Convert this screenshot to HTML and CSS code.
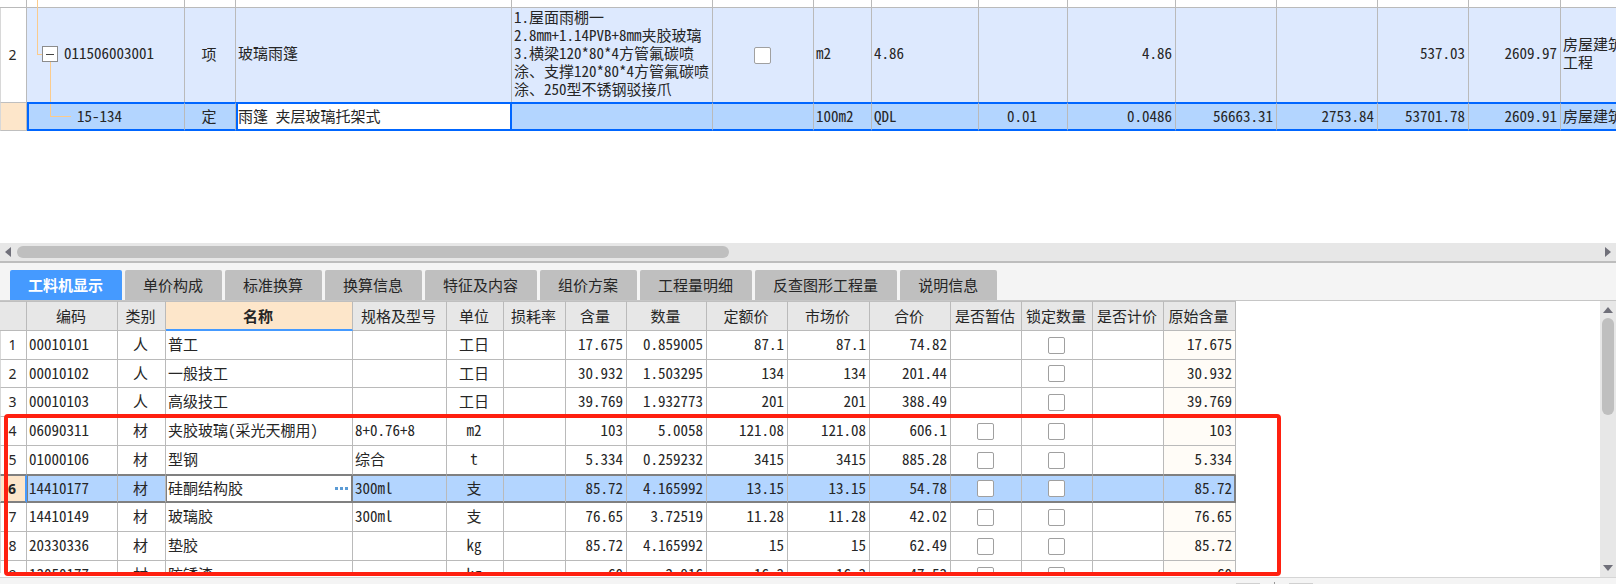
FILE: index.html
```html
<!DOCTYPE html>
<html lang="zh-CN">
<head>
<meta charset="utf-8">
<title>工料机显示</title>
<link rel="stylesheet" href="styles.css">
</head>
<body>
<main class="app">
  <section class="bill">
    <table class="grid bill-grid">
      <colgroup>
        <col class="w27"><col class="w158"><col class="w51"><col class="w276"><col class="w201"><col class="w101"><col class="w58"><col class="w107"><col class="w89"><col class="w108"><col class="w101"><col class="w101"><col class="w91"><col class="w92"><col>
      </colgroup>
      <tbody>
        <tr class="stub"><td></td><td class="tree"><i class="branch branch-pass"></i></td><td></td><td></td><td></td><td></td><td></td><td></td><td></td><td></td><td></td><td></td><td></td><td></td><td></td></tr>
        <tr class="item">
          <td class="no">2</td>
          <td class="tree"><i class="branch branch-in"></i><i class="branch branch-down"></i><button class="toggle" aria-label="折叠"></button>011506003001</td>
          <td class="c">项</td>
          <td>玻璃雨篷</td>
          <td class="desc">1.屋面雨棚一<br>2.8mm+1.14PVB+8mm夹胶玻璃<br>3.横梁120*80*4方管氟碳喷<br>涂、支撑120*80*4方管氟碳喷<br>涂、250型不锈钢驳接爪</td>
          <td class="c"><input type="checkbox" class="check" aria-label="选择"></td>
          <td>m2</td><td>4.86</td><td></td>
          <td class="n">4.86</td><td></td><td></td>
          <td class="n">537.03</td><td class="n">2609.97</td>
          <td class="desc">房屋建筑<br>工程</td>
        </tr>
        <tr class="active">
          <td class="no"></td>
          <td class="tree leaf"><i class="branch branch-leaf"></i>15-134</td>
          <td class="c">定</td>
          <td class="edit"><input class="field" aria-label="名称" value="雨篷 夹层玻璃托架式"></td>
          <td></td><td></td>
          <td>100m2</td><td>QDL</td><td class="c">0.01</td>
          <td class="n">0.0486</td><td class="n">56663.31</td><td class="n">2753.84</td><td class="n">53701.78</td><td class="n">2609.91</td>
          <td>房屋建筑</td>
        </tr>
      </tbody>
    </table>
  </section>

  <div class="hscroll">
    <svg class="arrow" viewBox="0 0 6 10"><path d="M6 0v10L0 5z"/></svg>
    <div class="htrack"><div class="hthumb"></div></div>
    <svg class="arrow" viewBox="0 0 6 10"><path d="M0 0v10l6-5z"/></svg>
  </div>

  <nav class="tabs">
    <button class="tab current">工料机显示</button>
    <button class="tab">单价构成</button>
    <button class="tab">标准换算</button>
    <button class="tab">换算信息</button>
    <button class="tab">特征及内容</button>
    <button class="tab">组价方案</button>
    <button class="tab">工程量明细</button>
    <button class="tab">反查图形工程量</button>
    <button class="tab">说明信息</button>
  </nav>

  <section class="detail">
    <div class="view">
      <table class="grid res-grid">
        <colgroup>
          <col class="w27"><col class="w91"><col class="w48"><col class="w187"><col class="w94"><col class="w57"><col class="w62"><col class="w61"><col class="w80"><col class="w81"><col class="w82"><col class="w81"><col class="w71"><col class="w71"><col class="w71"><col class="w72">
        </colgroup>
        <thead>
          <tr><th></th><th>编码</th><th>类别</th><th class="sorted">名称</th><th>规格及型号</th><th>单位</th><th>损耗率</th><th>含量</th><th>数量</th><th>定额价</th><th>市场价</th><th>合价</th><th>是否暂估</th><th>锁定数量</th><th>是否计价</th><th>原始含量</th></tr>
        </thead>
        <tbody>
          <tr><td class="no">1</td><td>00010101</td><td class="c">人</td><td>普工</td><td></td><td class="c">工日</td><td></td><td class="n">17.675</td><td class="n">0.859005</td><td class="n">87.1</td><td class="n">87.1</td><td class="n">74.82</td><td></td><td class="c"><input type="checkbox" class="check" aria-label="锁定数量"></td><td></td><td class="n orig">17.675</td></tr>
          <tr><td class="no">2</td><td>00010102</td><td class="c">人</td><td>一般技工</td><td></td><td class="c">工日</td><td></td><td class="n">30.932</td><td class="n">1.503295</td><td class="n">134</td><td class="n">134</td><td class="n">201.44</td><td></td><td class="c"><input type="checkbox" class="check" aria-label="锁定数量"></td><td></td><td class="n orig">30.932</td></tr>
          <tr><td class="no">3</td><td>00010103</td><td class="c">人</td><td>高级技工</td><td></td><td class="c">工日</td><td></td><td class="n">39.769</td><td class="n">1.932773</td><td class="n">201</td><td class="n">201</td><td class="n">388.49</td><td></td><td class="c"><input type="checkbox" class="check" aria-label="锁定数量"></td><td></td><td class="n orig">39.769</td></tr>
          <tr><td class="no">4</td><td>06090311</td><td class="c">材</td><td>夹胶玻璃(采光天棚用)</td><td>8+0.76+8</td><td class="c">m2</td><td></td><td class="n">103</td><td class="n">5.0058</td><td class="n">121.08</td><td class="n">121.08</td><td class="n">606.1</td><td class="c"><input type="checkbox" class="check" aria-label="是否暂估"></td><td class="c"><input type="checkbox" class="check" aria-label="锁定数量"></td><td></td><td class="n orig">103</td></tr>
          <tr class="before"><td class="no">5</td><td>01000106</td><td class="c">材</td><td>型钢</td><td>综合</td><td class="c">t</td><td></td><td class="n">5.334</td><td class="n">0.259232</td><td class="n">3415</td><td class="n">3415</td><td class="n">885.28</td><td class="c"><input type="checkbox" class="check" aria-label="是否暂估"></td><td class="c"><input type="checkbox" class="check" aria-label="锁定数量"></td><td></td><td class="n orig">5.334</td></tr>
          <tr class="picked"><td class="no">6</td><td class="first">14410177</td><td class="c">材</td><td class="edit"><div class="combo"><input class="field" aria-label="名称" value="硅酮结构胶"><button class="more" aria-label="更多"><svg viewBox="0 0 13 3"><path d="M0 0h3v3H0zM5 0h3v3H5zM10 0h3v3h-3z"/></svg></button></div></td><td>300ml</td><td class="c">支</td><td></td><td class="n">85.72</td><td class="n">4.165992</td><td class="n">13.15</td><td class="n">13.15</td><td class="n">54.78</td><td class="c"><input type="checkbox" class="check" aria-label="是否暂估"></td><td class="c"><input type="checkbox" class="check" aria-label="锁定数量"></td><td></td><td class="n orig">85.72</td></tr>
          <tr><td class="no">7</td><td>14410149</td><td class="c">材</td><td>玻璃胶</td><td>300ml</td><td class="c">支</td><td></td><td class="n">76.65</td><td class="n">3.72519</td><td class="n">11.28</td><td class="n">11.28</td><td class="n">42.02</td><td class="c"><input type="checkbox" class="check" aria-label="是否暂估"></td><td class="c"><input type="checkbox" class="check" aria-label="锁定数量"></td><td></td><td class="n orig">76.65</td></tr>
          <tr><td class="no">8</td><td>20330336</td><td class="c">材</td><td>垫胶</td><td></td><td class="c">kg</td><td></td><td class="n">85.72</td><td class="n">4.165992</td><td class="n">15</td><td class="n">15</td><td class="n">62.49</td><td class="c"><input type="checkbox" class="check" aria-label="是否暂估"></td><td class="c"><input type="checkbox" class="check" aria-label="锁定数量"></td><td></td><td class="n orig">85.72</td></tr>
          <tr><td class="no">9</td><td>13050177</td><td class="c">材</td><td>防锈漆</td><td></td><td class="c">kg</td><td></td><td class="n">60</td><td class="n">2.916</td><td class="n">16.3</td><td class="n">16.3</td><td class="n">47.53</td><td class="c"><input type="checkbox" class="check" aria-label="是否暂估"></td><td class="c"><input type="checkbox" class="check" aria-label="锁定数量"></td><td></td><td class="n orig">60</td></tr>
        </tbody>
      </table>
    </div>
    <div class="vscroll">
      <svg class="varrow" viewBox="0 0 10 6"><path d="M0 6h10L5 0z"/></svg>
      <div class="vtrack"><div class="vthumb"></div></div>
      <svg class="varrow" viewBox="0 0 10 6"><path d="M0 0h10L5 6z"/></svg>
    </div>
    <div class="callout"></div>
  </section>

  <footer class="status"><i class="chip"></i><i class="tick"></i><i class="chip"></i></footer>
</main>
</body>
</html>
```
FILE: styles.css
```css
* { box-sizing: border-box; }

body {
  margin: 0;
  background: #fff;
  color: #262626;
  font: 15px/18px "Noto Sans CJK SC", sans-serif;
  font-feature-settings: "hwid";
}

button, input {
  font: inherit;
  font-feature-settings: inherit;
  color: inherit;
  margin: 0;
  padding: 0;
  border: 0;
}

.app {
  display: flex;
  flex-direction: column;
  height: 100vh;
  overflow: hidden;
}

/* grids */
.grid {
  table-layout: fixed;
  border-collapse: separate;
  border-spacing: 0;
}
.grid td, .grid th {
  padding: 0 3px 2px 2px;
  border-right: 1px solid #bababa;
  border-bottom: 1px solid #bababa;
  white-space: nowrap;
  overflow: hidden;
  text-align: left;
  font-weight: 400;
}
.grid .c { text-align: center; padding: 0 2px 2px 0; }
.grid td:has(.check) { padding-bottom: 0; }
.grid .n { text-align: right; }
.grid .no {
  padding: 0 2px 0 0;
  text-align: center;
  font-family: "Noto Sans", sans-serif;
  font-size: 14px;
  border-left: 1px solid #d8d8d8;
}

.w27 { width: 27px; } .w48 { width: 48px; } .w51 { width: 51px; }
.w57 { width: 57px; } .w58 { width: 58px; } .w61 { width: 61px; }
.w62 { width: 62px; } .w71 { width: 71px; } .w72 { width: 72px; }
.w80 { width: 80px; } .w81 { width: 81px; } .w82 { width: 82px; }
.w89 { width: 89px; } .w91 { width: 91px; } .w92 { width: 92px; }
.w94 { width: 94px; } .w101 { width: 101px; } .w107 { width: 107px; }
.w108 { width: 108px; } .w158 { width: 158px; } .w187 { width: 187px; }
.w201 { width: 201px; } .w276 { width: 276px; }

.check {
  appearance: none;
  display: block;
  width: 17px;
  height: 17px;
  margin: 0 auto;
  background: #fff;
  border: 1px solid #a0a0a0;
  border-radius: 2px;
}
.field {
  display: block;
  width: 100%;
  height: 24px;
  padding-bottom: 2px;
  background: #fff;
  outline: 0;
}

/* bill of quantities */
.bill { flex: 1; min-height: 0; overflow: hidden; }
.bill-grid { width: 100%; }
.bill-grid td:last-child { border-right: 0; }
.stub td { height: 8px; line-height: 0; }
.item td { height: 93px; background: #dde9fe; border-bottom: 0; padding-bottom: 4px; }
.item .no { background: #fff; }
.active td {
  height: 29px;
  background: #b3d5ff;
  border-top: 2px solid #06f;
  border-bottom: 2px solid #06f;
}
.active .no {
  background: #fde6ca;
  border-top: 1px solid #bfbfbf;
  border-bottom: 1px solid #bfbfbf;
}
.active .tree { border-left: 2px solid #06f; }
.active .edit {
  background: #fff;
  border-left: 2px solid #06f;
  border-right: 2px solid #06f;
  padding: 0;
}

/* tree column */
.grid .tree { position: relative; overflow: visible; padding-left: 37px; }
.grid .leaf { padding-left: 48px; }
.branch { position: absolute; border: 0 solid #fbcb8c; }
.branch-pass { left: 10px; top: 0; height: 8px; border-left-width: 1px; }
.branch-in { left: 10px; top: 0; width: 6px; height: 47px; border-left-width: 1px; border-bottom-width: 1px; }
.branch-down { left: 23px; top: 54px; bottom: 0; border-left-width: 1px; }
.branch-leaf { left: 21px; top: 0; width: 21px; height: 13px; border-left-width: 1px; border-bottom-width: 1px; }
.toggle {
  position: absolute;
  left: 15px;
  top: 38px;
  width: 16px;
  height: 16px;
  background: linear-gradient(#444, #444) center / 8px 1px no-repeat #fff;
  border: 1px solid #8c8c8c;
}

/* horizontal scroll bar */
.hscroll {
  display: flex;
  align-items: center;
  gap: 6px;
  height: 20px;
  padding: 0 5px;
  background: #e7e7e7;
  border-bottom: 2px solid #bdbdbd;
  flex: none;
}
.arrow { width: 6px; height: 10px; fill: #70707a; }
.htrack { flex: 1; }
.hthumb { width: 45%; height: 12px; border-radius: 6px; background: #bfbfbf; }

/* tabs */
.tabs {
  display: flex;
  align-items: flex-end;
  gap: 3px;
  height: 38px;
  padding-left: 10px;
  background: #f4f4f4;
  border-bottom: 1px solid #c6c6c6;
  flex: none;
}
.tab {
  height: 30px;
  padding: 0 19px 0 18px;
  background: #bfbfbf;
  border-radius: 2px 2px 0 0;
}
.current { background: #459aff; color: #fff; font-weight: 700; }

/* resource detail */
.detail { position: relative; display: flex; height: 276px; flex: none; }
.view { flex: 1; height: 272px; overflow: hidden; }
.res-grid { width: 1236px; }
.res-grid th {
  height: 30px;
  padding: 0 2px 0 0;
  text-align: center;
  background: #e7e7e7;
  border-top: 1px solid #bfbfbf;
}
.res-grid .sorted {
  background: #fde6ca;
  border-bottom: 2px solid #459aff;
  font-weight: 700;
}
.res-grid td { height: 29px; }
.res-grid tbody tr:nth-child(4n+2) td { height: 28px; }
.res-grid .orig { background: #fffcf7; }
.before td { border-bottom-color: #808080; }
.picked td, .res-grid .picked .orig {
  background: #b3d5ff;
  border-top: 1px solid #808080;
  border-bottom: 2px solid #808080;
}
.res-grid .picked .orig { border-right: 2px solid #808080; padding-right: 2px; }
.res-grid .picked .no { background: #fde6ca; font-weight: 700; border-right: 2px solid #459aff; }
.res-grid .picked .first { border-left: 1px solid #808080; padding-left: 1px; }
.res-grid .picked .edit {
  background: #fff;
  padding: 0 2px 0 1px;
  border-left: 1px solid #808080;
  border-right: 2px solid #808080;
}
.combo { display: flex; align-items: center; }
.more { flex: none; width: 14px; background: none; }
.more svg { display: block; width: 13px; height: 3px; fill: #5b9bd5; }

.vscroll {
  display: flex;
  flex-direction: column;
  align-items: center;
  gap: 5px;
  width: 16px;
  padding: 6px 0;
  background: #e7e7e7;
}
.varrow { width: 10px; height: 6px; fill: #70707a; }
.vtrack { flex: 1; }
.vthumb { width: 12px; height: 40%; border-radius: 6px; background: #bfbfbf; }

/* red highlight over rows 4 to 9 */
.callout {
  position: absolute;
  left: 4px;
  top: 113px;
  width: 1277px;
  height: 162px;
  border: 4px solid #ff2010;
  border-radius: 4px;
  pointer-events: none;
}

.status {
  display: flex;
  align-items: flex-end;
  gap: 14px;
  height: 7px;
  padding-left: 1236px;
  background: #f4f4f4;
  border-top: 1px solid #d5d5d5;
  flex: none;
}
.chip { width: 24px; height: 1px; background: #d0d0d0; }
.tick { width: 1px; height: 2px; background: #999; }
```
